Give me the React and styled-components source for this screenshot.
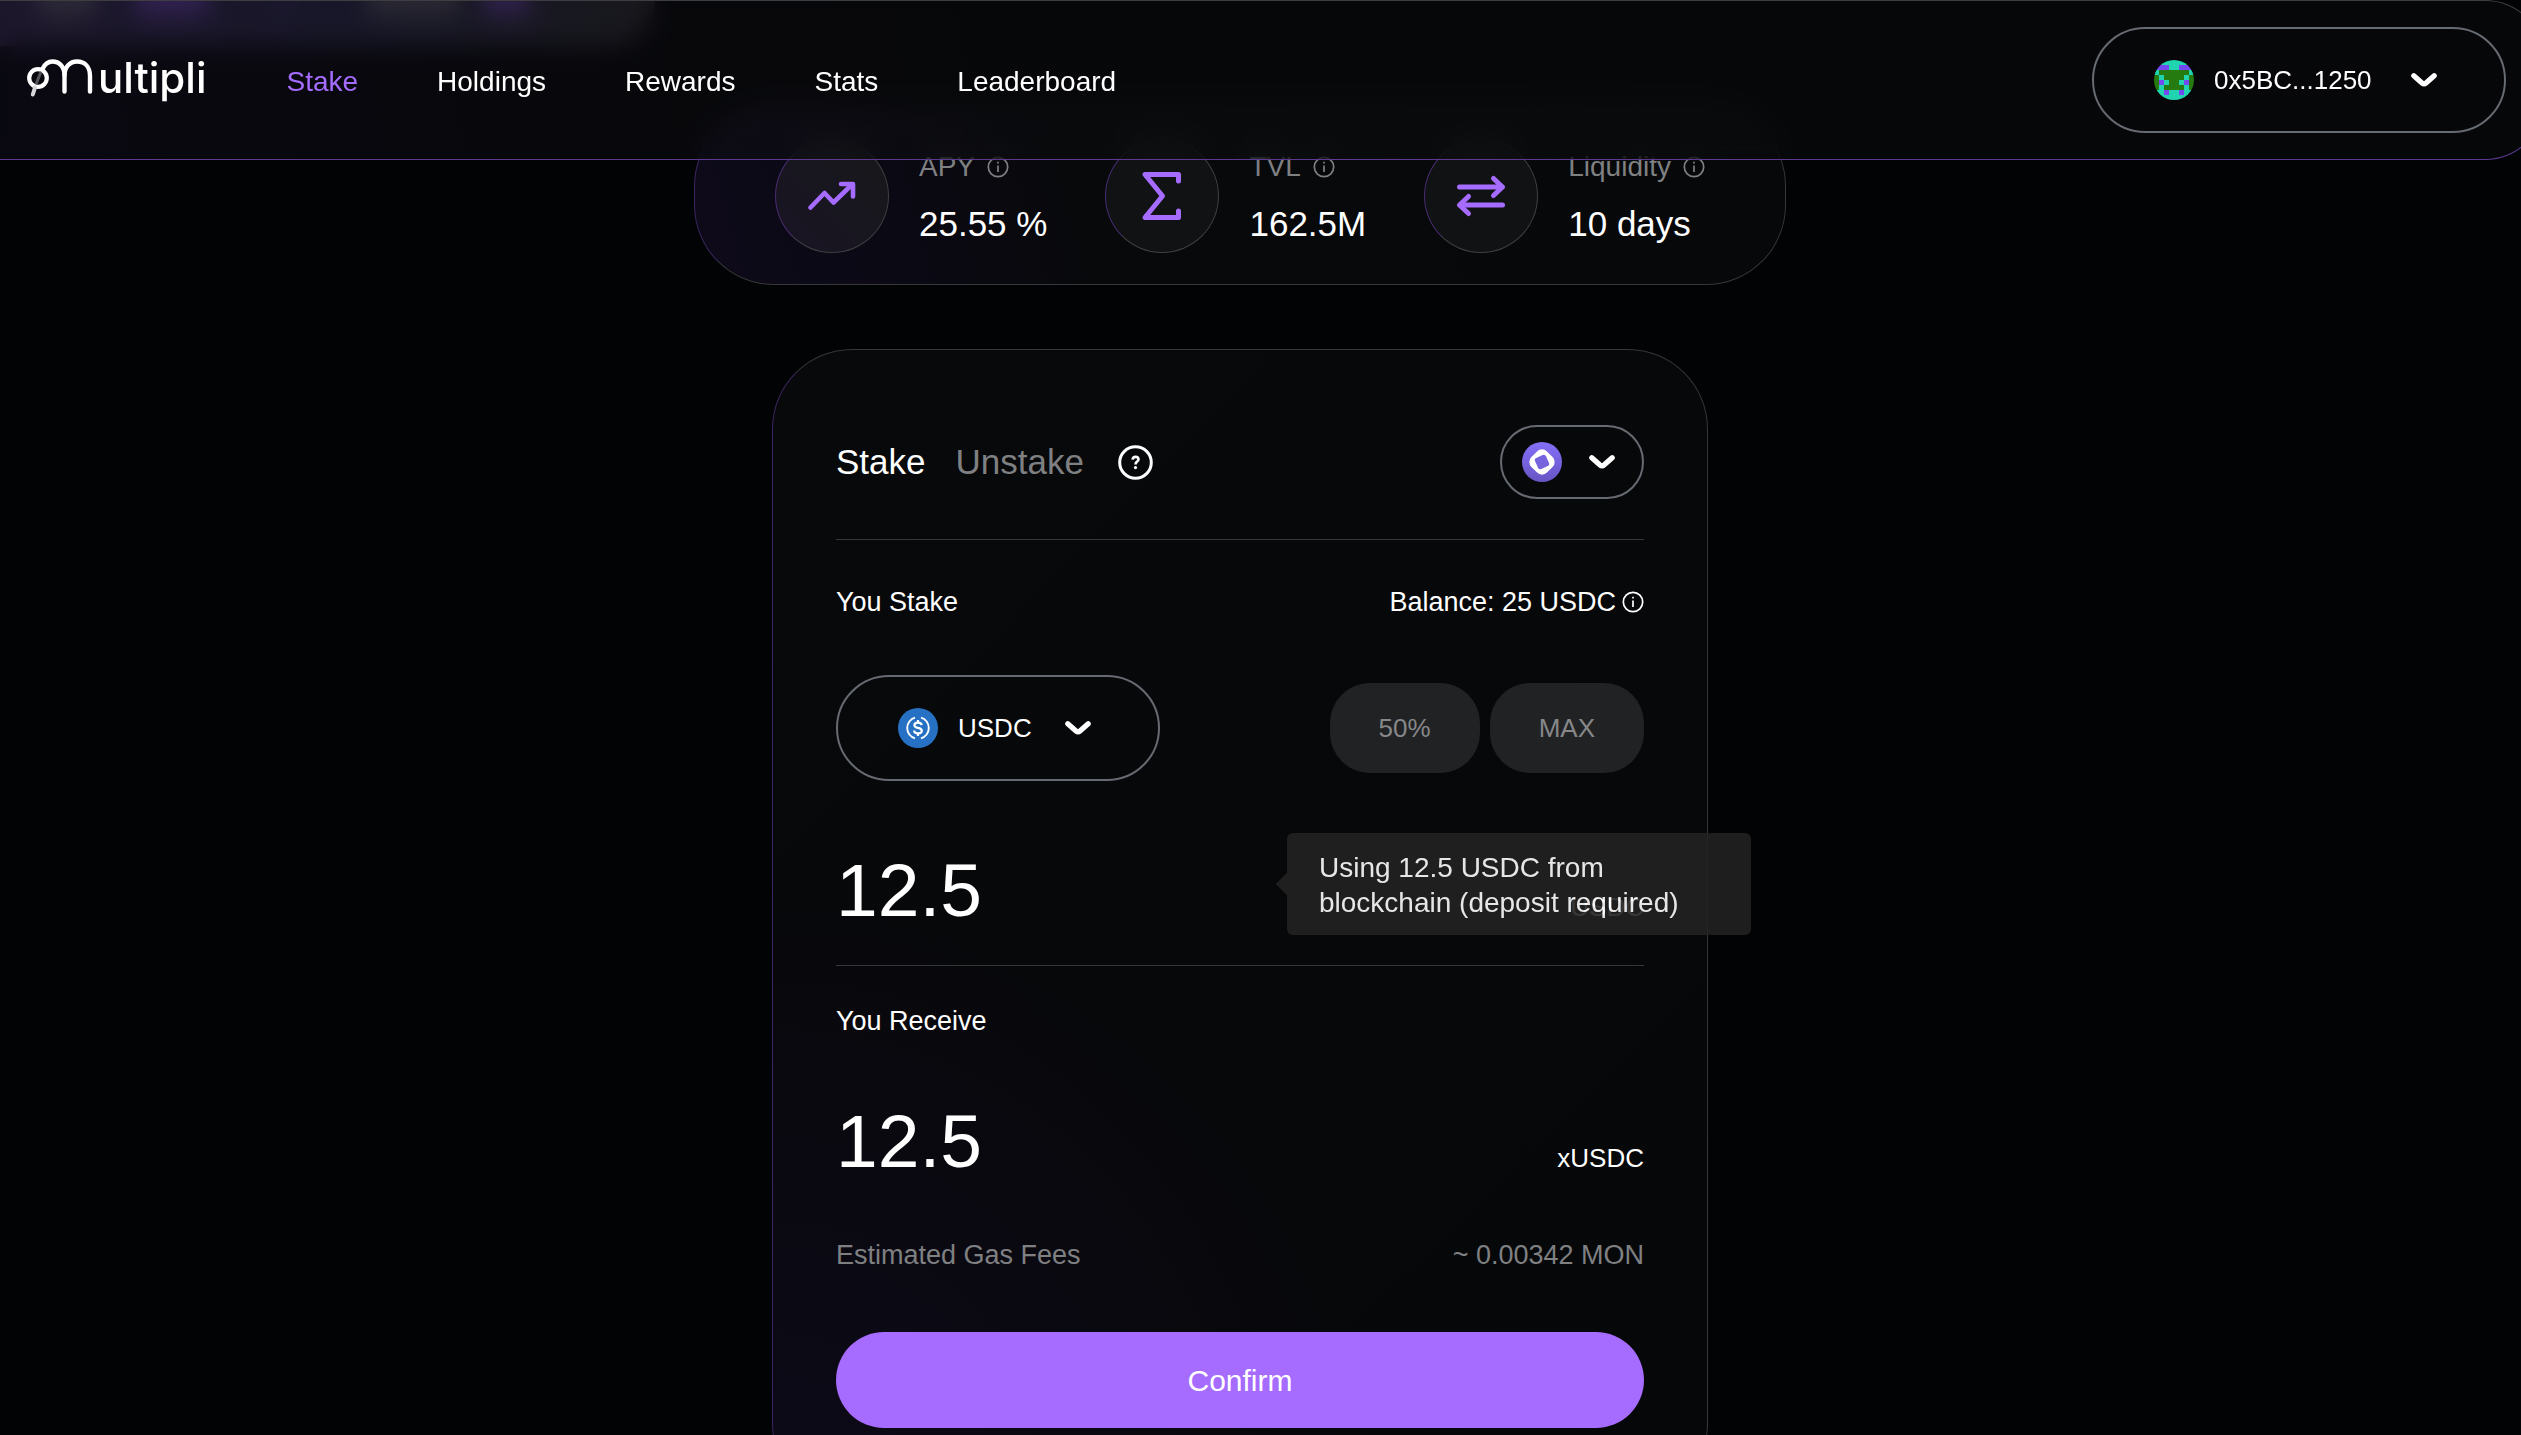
import React, { useState } from "react";
import styled, { createGlobalStyle } from "styled-components";

const color = {
  page: "#020305",
  panel: "#07080a",
  text: "#ffffff",
  muted: "#7f8082",
  line: "#363738",
  pill: "#666a71",
  accent: "#a56cff",
  accentDim: "#3d2660",
};

const GlobalStyle = createGlobalStyle`
  *, *::before, *::after { box-sizing: border-box; }
  body {
    margin: 0;
    background: ${color.page};
    color: ${color.text};
    font-family: "Liberation Sans", Arial, sans-serif;
  }
  button, input, select { font: inherit; color: inherit; }
  button { cursor: pointer; }
`;

/* ---------- page ---------- */

const Page = styled.div`
  height: 100vh;
  overflow-x: hidden;
  overflow-y: auto;
  scrollbar-width: none;
  background: ${color.page};
`;

const Banner = styled.div`
  display: flex;
  align-items: flex-start;
  width: 655px;
  height: 46px;
  padding-left: 36px;
  border-radius: 0 0 46px 0;
  background: linear-gradient(90deg, #281f3a 0%, #20203a 55%, #242428 100%);
`;

const BannerMark = styled.span`
  width: ${(p) => p.$width}px;
  height: 12px;
  margin-left: ${(p) => p.$before || 0}px;
  border-radius: 6px;
  background: ${(p) => (p.$accent ? "#7a48c8" : "#66666a")};
  filter: blur(8px);
`;

const Main = styled.main`
  display: flex;
  flex-direction: column;
  align-items: center;
  gap: 64px;
  padding: 60px 41px 80px 0;
`;

/* ---------- header ---------- */

const Header = styled.header`
  position: fixed;
  z-index: 10;
  top: 0;
  left: 0;
  right: -24px;
  display: flex;
  align-items: center;
  height: 160px;
  padding: 0 38px 0 26px;
  border: 1px solid #3e3e42;
  border-left: 0;
  border-bottom-color: #5b3a90;
  border-radius: 0 60px 60px 0;
  background: linear-gradient(
    80deg,
    rgba(18, 15, 30, 0.5) 0%,
    rgba(14, 13, 20, 0.5) 20%,
    rgba(12, 13, 15, 0.5) 36%,
    rgba(11, 12, 14, 0.5) 100%
  );
  backdrop-filter: blur(12px);
`;

const Logo = styled.a`
  display: flex;
  align-items: center;
  gap: 2px;
  padding-bottom: 4px;
  color: ${color.text};
  font-family: Inter, sans-serif;
  font-size: 42px;
  font-weight: 500;
  line-height: 48px;
  text-decoration: none;
`;

const Nav = styled.nav`
  display: flex;
  gap: 79px;
  margin-left: 80px;
  padding-top: 4px;
`;

const NavLink = styled.a`
  color: ${(p) => (p.$active ? color.accent : color.text)};
  font-size: 28px;
  line-height: 36px;
  text-decoration: none;
`;

/* ---------- pills ---------- */

const Pill = styled.div`
  display: flex;
  align-items: center;
  gap: 20px;
  min-width: ${(p) => p.$minWidth}px;
  height: ${(p) => (p.$compact ? 74 : 106)}px;
  padding: 0 ${(p) => (p.$compact ? 20 : 60)}px;
  border: 2px solid ${color.pill};
  border-radius: 53px;
  background: transparent;
  font-size: 26px;
`;

const WalletButton = styled(Pill).attrs({ as: "button", type: "button" })`
  margin-left: auto;
`;

const PillText = styled.span`
  flex: 1;
  text-align: left;
`;

const TokenSelect = styled.select`
  flex: 1;
  min-width: 0;
  padding: 0;
  border: 0;
  outline: 0;
  background: transparent;
  appearance: none;
`;

/* ---------- stats ---------- */

const Stats = styled.section`
  display: flex;
  align-items: center;
  justify-content: space-between;
  width: 1092px;
  height: 179px;
  padding: 0 80px;
  border: 1px solid ${color.line};
  border-left-color: ${color.accentDim};
  border-radius: 80px;
  background: linear-gradient(75deg, #0e0a1a 0%, #0b0914 18%, #08090b 36%, ${color.panel} 100%);
`;

const Stat = styled.div`
  display: flex;
  align-items: center;
  gap: 30px;
`;

const StatIcon = styled.div`
  display: grid;
  place-items: center;
  width: 114px;
  height: 114px;
  border: 1px solid #3f4042;
  border-left-color: #4a2d74;
  border-radius: 50%;
  background: ${(p) => (p.$tinted ? "linear-gradient(45deg, #191424, #17181a)" : "#111214")};
`;

const StatBody = styled.div`
  display: flex;
  flex-direction: column;
  gap: 17px;
`;

const StatLabel = styled.div`
  display: flex;
  align-items: center;
  gap: 12px;
  color: ${color.muted};
  font-size: 28px;
  line-height: 40px;
`;

const StatValue = styled.div`
  font-size: 35px;
  line-height: 40px;
`;

/* ---------- stake card ---------- */

const Card = styled.form`
  width: 936px;
  padding: 75px 63px 75px;
  border: 1px solid ${color.line};
  border-left-color: ${color.accentDim};
  border-radius: 80px;
  background: radial-gradient(ellipse 600px 620px at 0% 100%, #0d0a18 0%, #0a0911 55%, transparent 100%),
    linear-gradient(135deg, #08090b, #060709);
`;

const CardHeader = styled.div`
  display: flex;
  align-items: center;
  padding-bottom: 40px;
  border-bottom: 1px solid ${color.line};
`;

const Tabs = styled.div`
  display: flex;
  gap: 30px;
  margin-right: 34px;
`;

const Tab = styled.button`
  padding: 0;
  border: 0;
  background: none;
  color: ${(p) => (p.$active ? color.text : color.muted)};
  font-size: 35px;
  line-height: 40px;
`;

const IconButton = styled.button`
  display: grid;
  padding: 0;
  border: 0;
  background: none;
`;

const NetworkButton = styled(Pill).attrs({ as: "button", type: "button" })`
  margin-left: auto;
`;

const Row = styled.div`
  display: flex;
  align-items: ${(p) => p.$align || "center"};
  justify-content: space-between;
  margin-top: ${(p) => p.$top}px;
  color: ${(p) => (p.$muted ? color.muted : color.text)};
  font-size: 27px;
  line-height: 36px;
`;

const Balance = styled.span`
  display: flex;
  align-items: center;
  gap: 6px;
`;

const Presets = styled.div`
  display: flex;
  gap: 10px;
`;

const Preset = styled.button`
  height: 90px;
  padding: 0 49px;
  border: 0;
  border-radius: 40px;
  background: #212224;
  color: #868789;
  font-size: 26px;
`;

const StakeSection = styled.div`
  padding-bottom: 25px;
  border-bottom: 1px solid ${color.line};
`;

const AmountField = styled.div`
  position: relative;
  width: 440px;
`;

const AmountInput = styled.input`
  display: block;
  width: 100%;
  height: 100px;
  padding: 0;
  border: 0;
  outline: 0;
  background: transparent;
  font-size: 75px;
  line-height: 100px;
`;

const AmountOutput = styled.output`
  font-size: 75px;
  line-height: 100px;
`;

const Unit = styled.span`
  font-size: 26px;
`;

const Tooltip = styled.div`
  position: absolute;
  z-index: 2;
  top: -7px;
  left: calc(100% + 11px);
  width: 464px;
  padding: 17px 32px 15px;
  border-radius: 6px;
  background: #222222;
  font-size: 28px;
  line-height: 35px;
  opacity: 0.9;

  &::before {
    content: "";
    position: absolute;
    top: calc(50% - 8px);
    left: -8px;
    width: 16px;
    height: 16px;
    background: #222222;
    transform: rotate(45deg);
  }
`;

const ConfirmButton = styled.button`
  width: 100%;
  height: 96px;
  margin-top: 59px;
  padding: 2px 0 0;
  border: 0;
  border-radius: 48px;
  background: ${color.accent};
  font-size: 30px;
`;

/* ---------- icons ---------- */

const LogoMark = () => (
  <svg width="70" height="42" viewBox="26 56 70 42" fill="none" stroke="#fff" strokeWidth="4.4" strokeLinecap="round" aria-hidden="true">
    <circle cx="38" cy="77" r="8.8" strokeWidth="4.2" />
    <path d="M40.5 72 L36.5 82" stroke="#55555c" strokeWidth="3" />
    <path d="M35 86.5 L32.8 93.5" stroke="#d8d8dc" strokeWidth="4" />
    <path d="M42.5 68 C45 62.5 48.500 60.500 52.500 60.500 C59.500 60.500 64.500 66 64.500 74 V90.500" />
    <path d="M64.500 74 C64.500 66 70 60.500 77 60.500 C85 60.500 90 66 90 75 V90.500" />
  </svg>
);

const Chevron = () => (
  <svg width="40" height="40" viewBox="0 0 40 40" fill="none" aria-hidden="true">
    <path d="M9.8 15.7 L18 23 Q20 24.800 22 23 L30.200 15.700" stroke="#fff" strokeWidth="5.2" strokeLinecap="round" />
  </svg>
);

const InfoIcon = () => (
  <svg width="22" height="22" viewBox="0 0 22 22" fill="none" stroke="currentColor" strokeWidth="1.7" aria-hidden="true">
    <circle cx="11" cy="11" r="9.700" />
    <path d="M11 9.500 V16" />
    <path d="M11 5.800 V7.600" />
  </svg>
);

const HelpIcon = () => (
  <svg width="35" height="35" viewBox="0 0 35 35" fill="none" stroke="#fff" strokeWidth="3" aria-hidden="true">
    <circle cx="17.500" cy="17.500" r="15.800" />
    <path d="M14.600 14.600 C14.800 12.300 16.200 11.900 17.500 11.900 C19.400 11.900 20.500 13 20.500 14.400 C20.500 16.600 17.500 16.600 17.500 19.400" strokeWidth="2.600" />
    <circle cx="17.500" cy="22.600" r="1.600" fill="#fff" stroke="none" />
  </svg>
);

const AccentIcon = ({ children }) => (
  <svg width="56" height="56" viewBox="0 0 56 56" fill="none" stroke={color.accent} strokeWidth="5" strokeLinecap="round" strokeLinejoin="round" aria-hidden="true">
    {children}
  </svg>
);

const TrendIcon = () => (
  <AccentIcon>
    <path d="M6.500 39.500 L20.500 25 L29.500 34.500 L48 16.500" strokeWidth="4.600" />
    <path d="M37 16 H49 V28.500" strokeWidth="4.600" />
  </AccentIcon>
);

const SigmaIcon = () => (
  <AccentIcon>
    <path d="M44.500 13 V6.500 H11 L28.500 28 L11 49.500 H44.500 V43" />
  </AccentIcon>
);

const SwapIcon = () => (
  <AccentIcon>
    <path d="M6.500 19 H49" />
    <path d="M40.500 10.500 L49.500 19 L40.500 27.500" />
    <path d="M49.500 37 H7" />
    <path d="M15.500 28.500 L6.500 37 L15.500 45.500" />
  </AccentIcon>
);

const avatarColors = { t: "#1fd4ae", p: "#7549f2", g: "#257a10" };
const avatarRows = ["tttttttt", "pppttppp", "tggggggt", "gtggggtg", "gptggtpg", "gtggggtg", "ttpttptt", "tttttttt"];

const Avatar = () => (
  <svg width="40" height="40" viewBox="0 0 8 8" shapeRendering="crispEdges" aria-hidden="true">
    <clipPath id="avatar-clip">
      <circle cx="4" cy="4" r="4" />
    </clipPath>
    <g clipPath="url(#avatar-clip)">
      {avatarRows.flatMap((row, y) =>
        [...row].map((cell, x) => (
          <rect key={`${x}-${y}`} x={x} y={y} width="1" height="1" fill={avatarColors[cell]} />
        ))
      )}
    </g>
  </svg>
);

const NetworkIcon = () => (
  <svg width="40" height="40" viewBox="0 0 40 40" aria-hidden="true">
    <defs>
      <linearGradient id="network-fill" x1="0" y1="0" x2="0" y2="1">
        <stop offset="0" stopColor="#846ff8" />
        <stop offset="1" stopColor="#6755c4" />
      </linearGradient>
    </defs>
    <circle cx="20" cy="20" r="20" fill="url(#network-fill)" />
    <rect x="9" y="9" width="22" height="22" rx="7" fill="#fff" transform="rotate(45 20 20)" />
    <rect x="14" y="14" width="12" height="12" rx="2.500" fill="#7663de" transform="rotate(-25 20 20)" />
  </svg>
);

const UsdcIcon = () => (
  <svg width="40" height="40" viewBox="0 0 40 40" fill="none" stroke="#fff" strokeWidth="1.900" aria-hidden="true">
    <circle cx="20" cy="20" r="20" fill="#2671c4" stroke="none" />
    <path d="M17 9.700 A10.700 10.700 0 0 0 17 30.300" />
    <path d="M23 9.700 A10.700 10.700 0 0 1 23 30.300" />
    <path d="M23.700 17.200 C23.500 15.300 22 14.600 20 14.600 C17.800 14.600 16.400 15.600 16.400 17.200 C16.400 21 23.800 18.700 23.800 22.700 C23.800 24.400 22.300 25.400 20 25.400 C17.700 25.400 16.200 24.500 16.100 22.500" strokeWidth="2.200" />
    <path d="M20 12 V15 M20 25 V28" strokeWidth="2.200" />
  </svg>
);

/* ---------- app ---------- */

const links = ["Stake", "Holdings", "Rewards", "Stats", "Leaderboard"];

const stats = [
  { label: "APY", value: "25.55 %", icon: <TrendIcon />, tinted: true },
  { label: "TVL", value: "162.5M", icon: <SigmaIcon /> },
  { label: "Liquidity", value: "10 days", icon: <SwapIcon /> },
];

export default function App() {
  const [amount, setAmount] = useState("12.5");
  const [tab, setTab] = useState("Stake");

  return (
    <Page>
      <GlobalStyle />

      <Header>
        <Logo href="#" aria-label="Multipli">
          <LogoMark />
          ultipli
        </Logo>
        <Nav>
          {links.map((name) => (
            <NavLink key={name} href={`#${name.toLowerCase()}`} $active={name === "Stake"}>
              {name}
            </NavLink>
          ))}
        </Nav>
        <WalletButton $minWidth={414} aria-haspopup="menu">
          <Avatar />
          <PillText>0x5BC...1250</PillText>
          <Chevron />
        </WalletButton>
      </Header>

      <Banner aria-hidden="true">
        <BannerMark $width={62} />
        <BannerMark $width={76} $before={36} $accent />
        <BannerMark $width={4} $before={72} $accent />
        <BannerMark $width={94} $before={80} />
        <BannerMark $width={49} $before={22} $accent />
      </Banner>

      <Main>
        <Stats>
          {stats.map((s) => (
            <Stat key={s.label}>
              <StatIcon $tinted={s.tinted}>{s.icon}</StatIcon>
              <StatBody>
                <StatLabel>
                  {s.label}
                  <InfoIcon />
                </StatLabel>
                <StatValue>{s.value}</StatValue>
              </StatBody>
            </Stat>
          ))}
        </Stats>

        <Card onSubmit={(e) => e.preventDefault()}>
          <CardHeader>
            <Tabs role="tablist">
              {["Stake", "Unstake"].map((name) => (
                <Tab key={name} type="button" role="tab" aria-selected={tab === name} $active={tab === name} onClick={() => setTab(name)}>
                  {name}
                </Tab>
              ))}
            </Tabs>
            <IconButton type="button" aria-label="Help">
              <HelpIcon />
            </IconButton>
            <NetworkButton $compact $minWidth={144} aria-label="Network" aria-haspopup="listbox">
              <NetworkIcon />
              <Chevron />
            </NetworkButton>
          </CardHeader>

          <StakeSection>
            <Row $top={44}>
              <label htmlFor="amount">You Stake</label>
              <Balance>
                Balance: 25 USDC
                <InfoIcon />
              </Balance>
            </Row>
            <Row $top={55}>
              <Pill $minWidth={324}>
                <UsdcIcon />
                <TokenSelect aria-label="Token" defaultValue="USDC">
                  <option>USDC</option>
                </TokenSelect>
                <Chevron />
              </Pill>
              <Presets>
                <Preset type="button" onClick={() => setAmount("12.5")}>50%</Preset>
                <Preset type="button" onClick={() => setAmount("25")}>MAX</Preset>
              </Presets>
            </Row>
            <Row $top={59} $align="baseline">
              <AmountField>
                <AmountInput id="amount" inputMode="decimal" value={amount} onChange={(e) => setAmount(e.target.value)} />
                <Tooltip role="tooltip">{`Using ${amount} USDC from blockchain (deposit required)`}</Tooltip>
              </AmountField>
              <Unit>USDC</Unit>
            </Row>
          </StakeSection>

          <Row $top={37}>
            <span>You Receive</span>
          </Row>
          <Row $top={52} $align="baseline">
            <AmountOutput htmlFor="amount">{amount}</AmountOutput>
            <Unit>xUSDC</Unit>
          </Row>
          <Row $top={46} $muted>
            <span>Estimated Gas Fees</span>
            <span>~ 0.00342 MON</span>
          </Row>
          <ConfirmButton type="submit">Confirm</ConfirmButton>
        </Card>
      </Main>
    </Page>
  );
}
